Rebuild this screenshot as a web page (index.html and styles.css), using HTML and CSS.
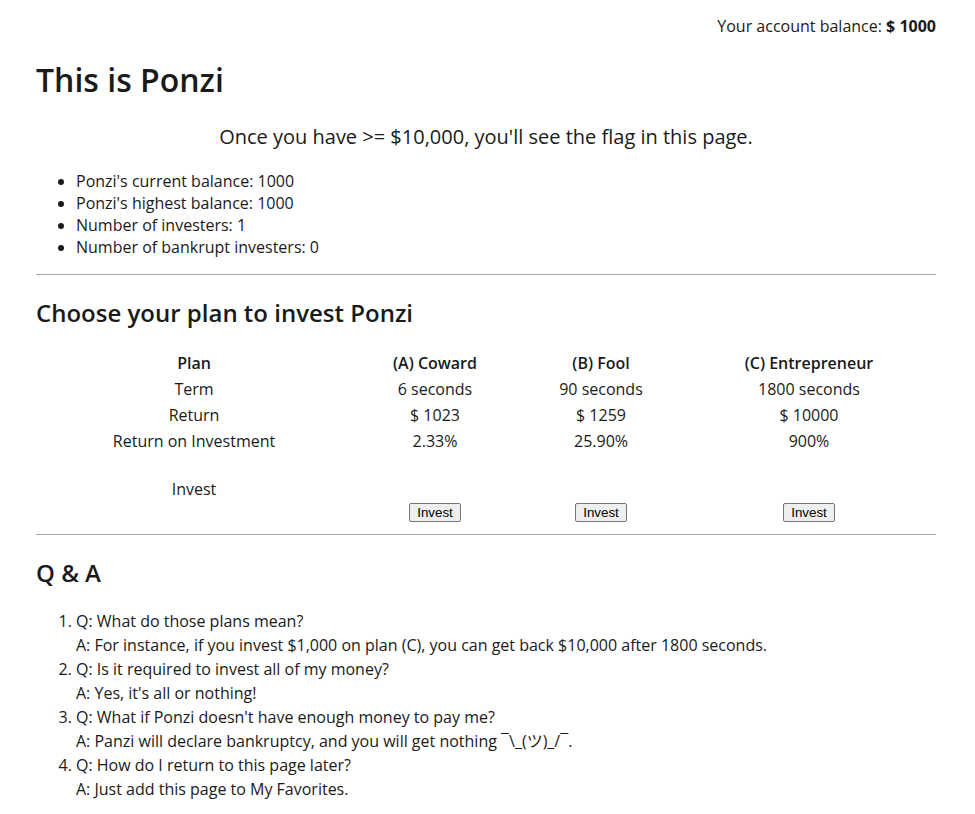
FILE: index.html
```html
<!DOCTYPE html>
<html>
<head>
<meta charset="utf-8">
<title>This is Ponzi</title>
<link rel="stylesheet" href="styles.css">
</head>
<body>
<div class="page">
  <div class="balance">Your account balance: <b>$ 1000</b></div>
  <h1 class="title">This is Ponzi</h1>
  <p class="flag-note">Once you have &gt;= $10,000, you'll see the flag in this page.</p>
  <ul class="stats">
    <li>Ponzi's current balance: 1000</li>
    <li>Ponzi's highest balance: 1000</li>
    <li>Number of investers: 1</li>
    <li>Number of bankrupt investers: 0</li>
  </ul>
  <hr class="rule">
  <h2 class="section-title">Choose your plan to invest Ponzi</h2>
  <table class="plans">
    <colgroup>
      <col class="c1"><col class="c2"><col class="c3"><col class="c4">
    </colgroup>
    <tr class="head"><th>Plan</th><th>(A) Coward</th><th>(B) Fool</th><th>(C) Entrepreneur</th></tr>
    <tr><td>Term</td><td>6 seconds</td><td>90 seconds</td><td>1800 seconds</td></tr>
    <tr><td>Return</td><td>$ 1023</td><td>$ 1259</td><td>$ 10000</td></tr>
    <tr><td>Return on Investment</td><td>2.33%</td><td>25.90%</td><td>900%</td></tr>
    <tr class="invest-row">
      <td class="invest-label">Invest</td>
      <td class="invest-cell"><button class="btn">Invest</button></td>
      <td class="invest-cell"><button class="btn">Invest</button></td>
      <td class="invest-cell"><button class="btn">Invest</button></td>
    </tr>
  </table>
  <hr class="rule rule-2">
  <h2 class="section-title qa-title">Q &amp; A</h2>
  <ol class="qa">
    <li>Q: What do those plans mean?<br>A: For instance, if you invest $1,000 on plan (C), you can get back $10,000 after 1800 seconds.</li>
    <li>Q: Is it required to invest all of my money?<br>A: Yes, it's all or nothing!</li>
    <li>Q: What if Ponzi doesn't have enough money to pay me?<br>A: Panzi will declare bankruptcy, and you will get nothing ¯\_(ツ)_/¯.</li>
    <li>Q: How do I return to this page later?<br>A: Just add this page to My Favorites.</li>
  </ol>
</div>
</body>
</html>
```

FILE: styles.css
```css
html, body {
  margin: 0;
  padding: 0;
  background: #ffffff;
}
body {
  font-family: "Open Sans", "Noto Sans CJK JP", sans-serif;
  font-size: 16px;
  line-height: 22px;
  color: #1a1a1a;
}
.page {
  margin: 0 39px 0 36px;
  padding-top: 15px;
  padding-bottom: 20px;
}
.balance {
  text-align: right;
  line-height: 22px;
}
.balance b {
  font-weight: 700;
}
.title {
  margin: 23px 0 0 0;
  font-size: 32px;
  line-height: 40px;
  font-weight: 600;
}
.flag-note {
  margin: 23px 0 0 0;
  text-align: center;
  font-size: 20px;
  line-height: 28px;
}
.stats {
  margin: 19px 0 0 0;
  padding-left: 40px;
}
.stats li {
  line-height: 22px;
}
.rule {
  margin: 16px 0 0 0;
  border: 0;
  border-top: 1px solid #a6a6a6;
  height: 0;
}
.rule-2 {
  margin-top: 10px;
}
.section-title {
  margin: 22px 0 0 0;
  font-size: 24px;
  line-height: 32px;
  font-weight: 600;
}
.qa-title {
  margin-top: 22px;
}
.plans {
  margin-top: 21px;
  border-collapse: collapse;
  table-layout: fixed;
  width: 898px;
}
.c1 { width: 316px; }
.c2 { width: 166px; }
.c3 { width: 166px; }
.c4 { width: 250px; }
.plans th, .plans td {
  padding: 2px 0;
  text-align: center;
  line-height: 22px;
  font-size: 16px;
}
.plans th {
  font-weight: 600;
}
.plans .invest-label {
  vertical-align: top;
  padding-top: 24px;
}
.plans .invest-cell {
  vertical-align: top;
  padding-top: 49px;
  line-height: 18px;
}
.btn {
  font-family: "Liberation Sans", Arial, sans-serif;
  font-size: 13.33px;
  color: #000;
  background: #efefef;
  border: 1px solid #767676;
  border-radius: 2px;
  padding: 1px 7px;
  height: 19px;
  line-height: 15px;
  vertical-align: top;
}
.qa {
  margin: 20px 0 0 0;
  padding-left: 40px;
}
.qa li {
  line-height: 24px;
}
```
